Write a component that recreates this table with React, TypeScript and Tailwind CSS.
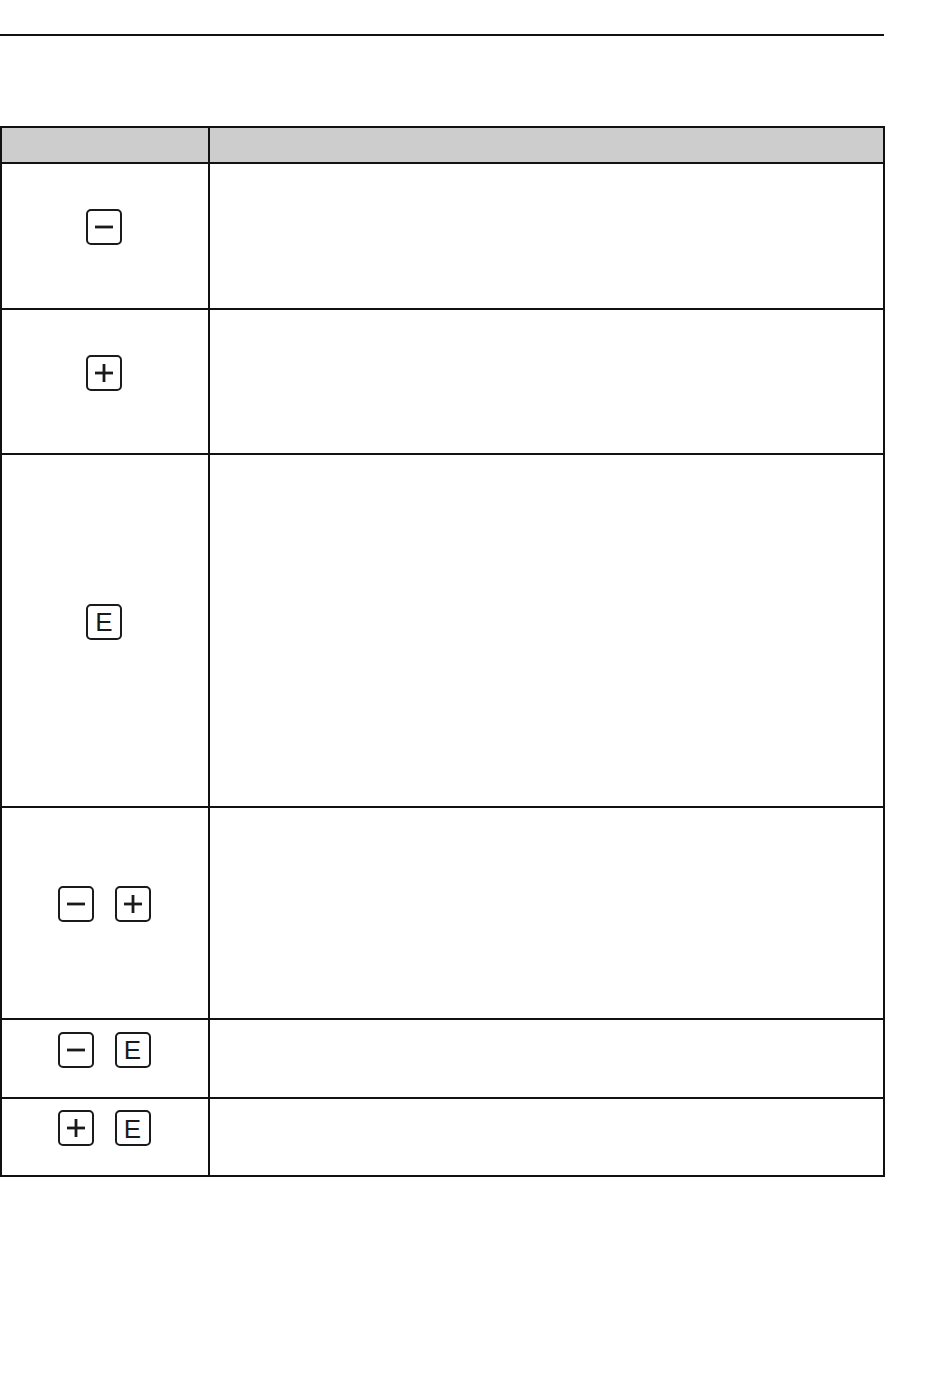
import React from 'react';

type KeyKind = 'minus' | 'plus' | 'E';

const Key = ({ kind }: { kind: KeyKind }) => (
    <div className="w-9 h-9 border-2 border-[#1a1a1a] rounded-[5px] flex items-center justify-center flex-shrink-0 bg-white">
        {kind === 'E' ? (
            <span className="text-[26px] leading-none text-[#1a1a1a] pt-[1px]" style={{ fontFamily: '"Liberation Sans", Arial, sans-serif' }}>
                E
            </span>
        ) : (
            <svg width="32" height="32" viewBox="0 0 32 32" fill="none">
                <line x1="7" y1="16" x2="25" y2="16" stroke="#1a1a1a" strokeWidth="2.8" />
                {kind === 'plus' && <line x1="16" y1="7" x2="16" y2="25" stroke="#1a1a1a" strokeWidth="2.8" />}
            </svg>
        )}
    </div>
);

// filas de la tabla: altura (incluye la línea superior) + teclas
const rows: { h: string; keys: KeyKind[] }[] = [
    { h: 'h-[146px]', keys: ['minus'] },
    { h: 'h-[145px]', keys: ['plus'] },
    { h: 'h-[353px]', keys: ['E'] },
    { h: 'h-[212px]', keys: ['minus', 'plus'] },
    { h: 'h-[79px]', keys: ['minus', 'E'] },
    { h: 'h-[78px]', keys: ['plus', 'E'] },
];

const App = () => {
    return (
        <div className="w-[950px] h-[1378px] bg-white pt-[34px]" style={{ fontFamily: '"Liberation Sans", Arial, sans-serif' }}>
            {/* --- línea superior --- */}
            <div className="w-[884px] h-[2px] bg-[#111]" />

            {/* --- tabla --- */}
            <div className="mt-[90px] w-[885px] border-2 border-[#111] flex flex-col">
                {/* cabecera */}
                <div className="flex h-[34px] bg-[#cdcdcd]">
                    <div className="w-[208px] border-r-2 border-[#111]" />
                    <div className="flex-1" />
                </div>

                {rows.map((row, i) => (
                    <div key={i} className={`flex border-t-2 border-[#111] ${row.h}`}>
                        <div className="w-[208px] border-r-2 border-[#111] flex items-center justify-center gap-[21px] pb-[18px] pr-[2px]">
                            {row.keys.map((k, j) => (
                                <Key key={j} kind={k} />
                            ))}
                        </div>
                        <div className="flex-1" />
                    </div>
                ))}
            </div>
        </div>
    );
};

export default App;
